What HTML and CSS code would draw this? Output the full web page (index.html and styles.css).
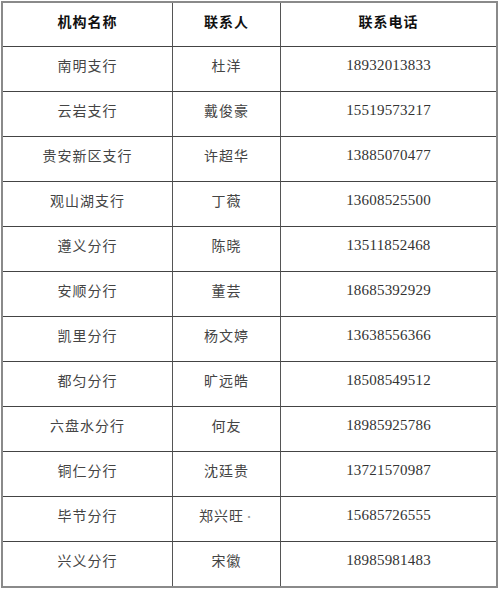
FILE: index.html
```html
<!DOCTYPE html>
<html lang="zh">
<head>
<meta charset="utf-8">
<link rel="stylesheet" href="styles.css">
</head>
<body>
<table class="contacts">
  <colgroup>
    <col class="c1"><col class="c2"><col class="c3">
  </colgroup>
  <thead>
    <tr><th>机构名称</th><th>联系人</th><th>联系电话</th></tr>
  </thead>
  <tbody>
    <tr><td>南明支行</td><td>杜洋</td><td class="num">18932013833</td></tr>
    <tr><td>云岩支行</td><td>戴俊豪</td><td class="num">15519573217</td></tr>
    <tr><td>贵安新区支行</td><td>许超华</td><td class="num">13885070477</td></tr>
    <tr><td>观山湖支行</td><td>丁薇</td><td class="num">13608525500</td></tr>
    <tr><td>遵义分行</td><td>陈晓</td><td class="num">13511852468</td></tr>
    <tr><td>安顺分行</td><td>董芸</td><td class="num">18685392929</td></tr>
    <tr><td>凯里分行</td><td>杨文婷</td><td class="num">13638556366</td></tr>
    <tr><td>都匀分行</td><td>旷远皓</td><td class="num">18508549512</td></tr>
    <tr><td>六盘水分行</td><td>何友</td><td class="num">18985925786</td></tr>
    <tr><td>铜仁分行</td><td>沈廷贵</td><td class="num">13721570987</td></tr>
    <tr><td>毕节分行</td><td>郑兴旺<span class="dot">·</span></td><td class="num">15685726555</td></tr>
    <tr><td>兴义分行</td><td>宋徽</td><td class="num">18985981483</td></tr>
  </tbody>
</table>
</body>
</html>
```
FILE: styles.css
```css
html, body {
  margin: 0;
  padding: 0;
  background: #ffffff;
}
body {
  padding: 1px 0 0 1px;
}
.contacts {
  border-collapse: separate;
  border-spacing: 0;
  border: 2px solid #8a8a8a;
  width: 497px;
  table-layout: fixed;
  font-family: "Noto Sans CJK SC", "Noto Sans", sans-serif;
}
.c1 { width: 170px; }
.c2 { width: 108px; }
.c3 { width: auto; }
.contacts th,
.contacts td {
  height: 45px;
  box-sizing: border-box;
  padding: 8px 0 0 0;
  vertical-align: top;
  text-align: center;
  border-right: 1px solid #555;
  border-bottom: 1px solid #444;
  line-height: 20px;
}
.contacts tr > :last-child {
  border-right: none;
}
.contacts tbody tr:last-child td {
  border-bottom: none;
  height: 44px;
}
.contacts th {
  height: 44px;
  padding-top: 8px;
  font-size: 14px;
  font-weight: 700;
  color: #111;
  letter-spacing: 1px;
}
.contacts td {
  font-size: 14px;
  color: #444;
  letter-spacing: 1px;
}
.contacts td.num {
  font-family: "Liberation Serif", serif;
  font-size: 15px;
  letter-spacing: 0.2px;
  color: #333;
}
.dot {
  color: #999;
  font-size: 10px;
  letter-spacing: 0;
}
```
